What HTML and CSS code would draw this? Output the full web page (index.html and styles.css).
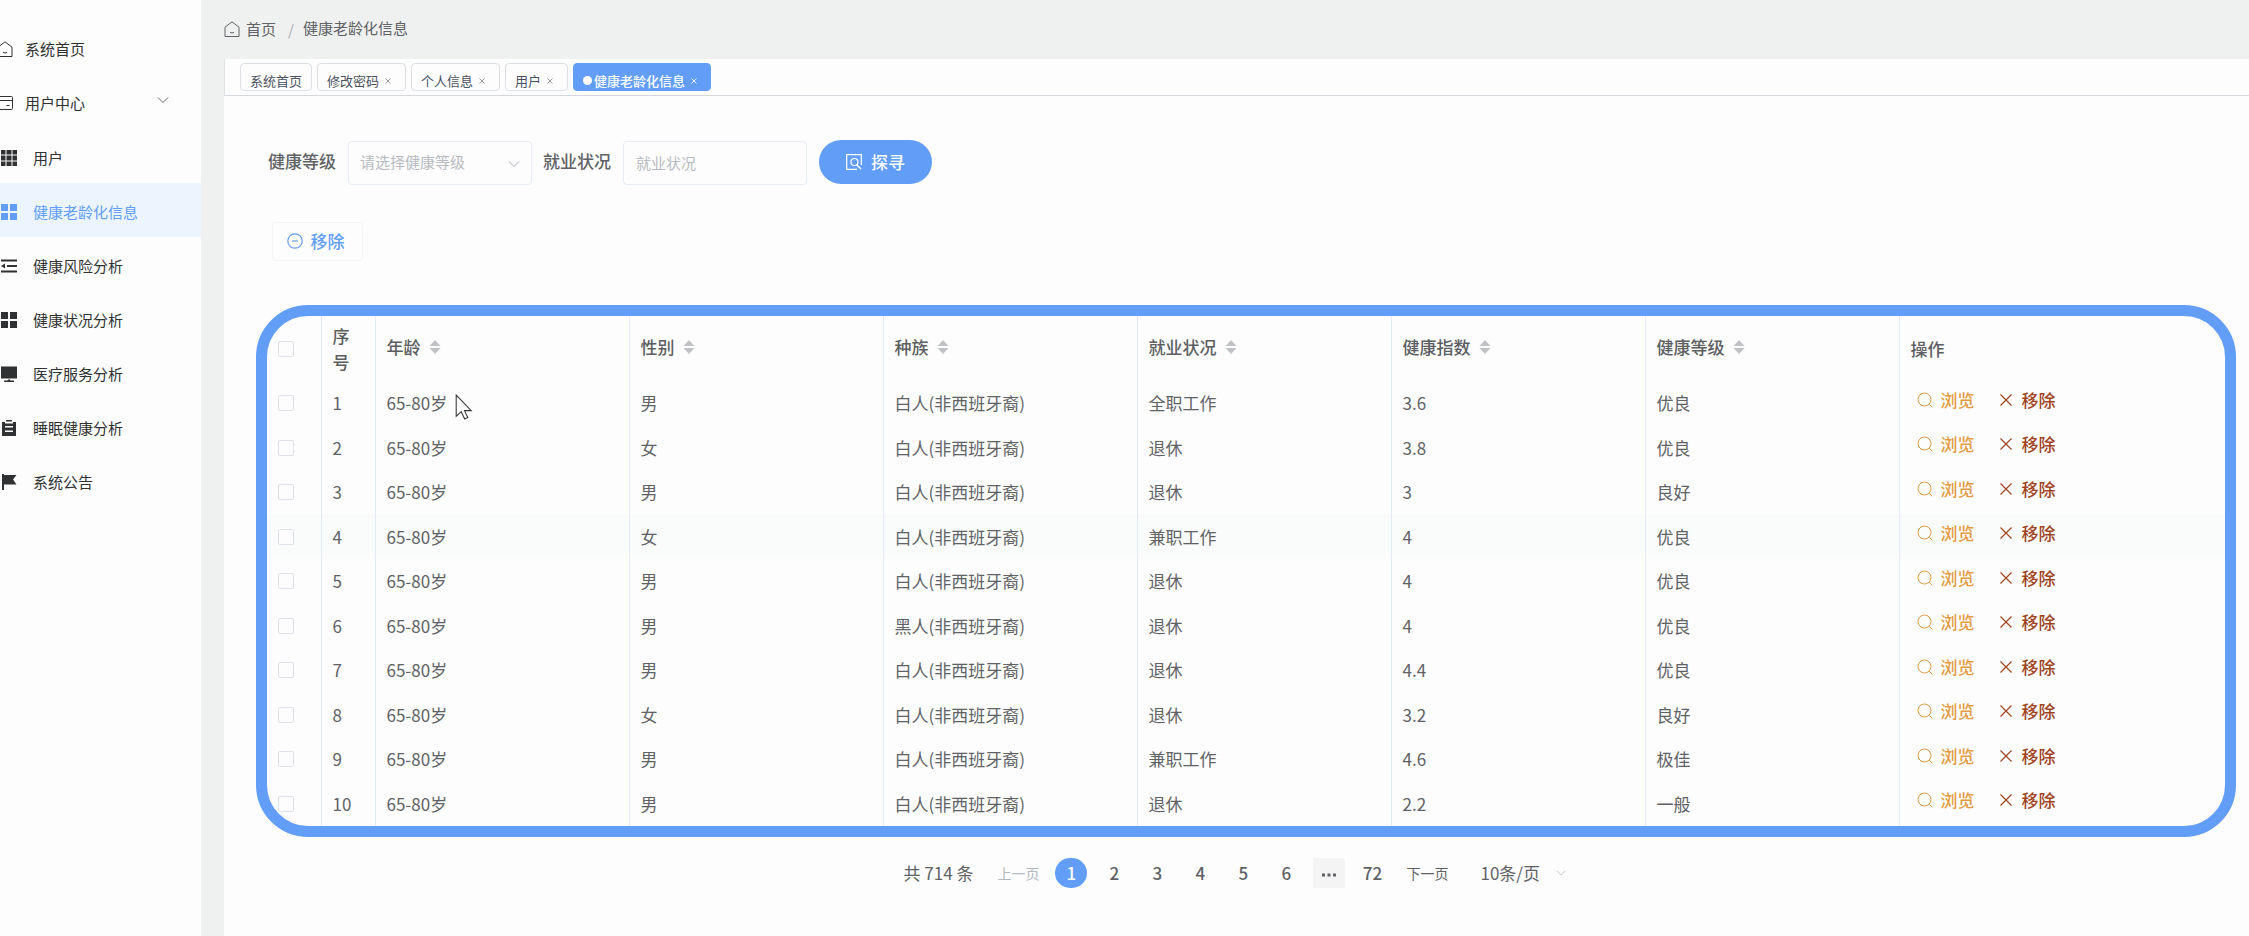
FILE: index.html
```html
<!DOCTYPE html>
<html lang="zh-CN">
<head>
<meta charset="utf-8">
<title>健康老龄化信息</title>
<link rel="stylesheet" href="styles.css">
</head>
<body>
<svg class="sprite" aria-hidden="true">
  <symbol id="home" viewBox="0 0 16 16"><path d="M1 6.200 8 .8l7 5.400v9.300H1zM6 11.200c1.200 1 2.800 1 4 0" fill="none" stroke="currentColor" stroke-linejoin="round"/></symbol>
  <symbol id="search" viewBox="0 0 16 16"><circle cx="7.500" cy="7.500" r="6.500" fill="none" stroke="currentColor"/><path d="m12.300 12.300 3 3" stroke="currentColor"/></symbol>
  <symbol id="cross" viewBox="0 0 16 16"><path d="m2.500 2.500 11 11M13.500 2.500l-11 11" fill="none" stroke="currentColor" stroke-width="1.200"/></symbol>
  <symbol id="close" viewBox="0 0 8 8"><path d="m1.500 1.500 5 5M6.500 1.500l-5 5" fill="none" stroke="currentColor"/></symbol>
  <symbol id="down" viewBox="0 0 12 12"><path d="m1 3.500 5 5 5-5" fill="none" stroke="currentColor"/></symbol>
  <symbol id="sort" viewBox="0 0 12 14"><path d="M6 0l5.500 6H.5zM6 14l5.500-6H.5z" fill="currentColor"/></symbol>
</svg>
<div class="app">
  <nav class="sidebar">
    <a class="item top" href="#"><svg class="icon"><use href="#home"/></svg>系统首页</a>
    <a class="item top" href="#"><svg class="icon" viewBox="0 0 16 16"><path d="M1 1.500h13.500q1 0 1 1v11q0 1-1 1H1M1 5.500h14.500M9.500 10.500h3" fill="none" stroke="currentColor"/></svg>用户中心<svg class="caret"><use href="#down"/></svg></a>
    <a class="item" href="#"><svg class="icon" viewBox="0 0 16 16"><path d="M0 0h4.500v4.500H0zM5.500 0h5v4.500h-5zM11.500 0H16v4.500h-4.500zM0 5.500h4.500v5H0zM5.500 5.500h5v5h-5zM11.500 5.500H16v5h-4.500zM0 11.500h4.500V16H0zM5.500 11.500h5V16h-5zM11.500 11.500H16V16h-4.500z" fill="currentColor"/></svg>用户</a>
    <a class="item active" href="#"><svg class="icon" viewBox="0 0 16 16"><path d="M0 0h7v7H0zM9 0h7v7H9zM0 9h7v7H0zM9 9h7v7H9z" fill="currentColor"/></svg>健康老龄化信息</a>
    <a class="item" href="#"><svg class="icon" viewBox="0 0 16 16"><path d="M0 1.500h16v2H0zM6 7h10v2H6zM0 12.500h16v2H0zM0 8l4-2.500v5z" fill="currentColor"/></svg>健康风险分析</a>
    <a class="item" href="#"><svg class="icon" viewBox="0 0 16 16"><path d="M0 0h7v7H0zM9 0h7v7H9zM0 9h7v7H0zM9 9h7v7H9z" fill="currentColor"/></svg>健康状况分析</a>
    <a class="item" href="#"><svg class="icon" viewBox="0 0 16 16"><path d="M0 .5h16v12H0zM7 13.500h2l.5 1H13V16H3v-1.500h3.500z" fill="currentColor"/></svg>医疗服务分析</a>
    <a class="item" href="#"><svg class="icon" viewBox="0 0 16 16"><path fill-rule="evenodd" d="M5 0h6v1.500H5zM1 2h3v1.500h8V2h3v14H1zM4 6v1.500h8V6zM4 10.500V12h8v-1.500z" fill="currentColor"/></svg>睡眠健康分析</a>
    <a class="item" href="#"><svg class="icon" viewBox="0 0 16 16"><path d="M1 0h2v1h12.500L12 5.500l3.500 5H3V16H1z" fill="currentColor"/></svg>系统公告</a>
  </nav>
  <div class="page">
    <header class="crumbs">
      <a class="crumb-home" href="#"><svg class="icon"><use href="#home"/></svg>首页</a>
      <span class="slash">/</span>
      <span class="crumb">健康老龄化信息</span>
    </header>
    <div class="tabs">
      <a class="tab" href="#">系统首页</a>
      <a class="tab closable" href="#">修改密码<svg class="close"><use href="#close"/></svg></a>
      <a class="tab closable" href="#">个人信息<svg class="close"><use href="#close"/></svg></a>
      <a class="tab closable" href="#">用户<svg class="close"><use href="#close"/></svg></a>
      <a class="tab closable current" href="#"><i class="dot"></i>健康老龄化信息<svg class="close"><use href="#close"/></svg></a>
    </div>
    <main class="content">
      <form class="filters">
        <label for="level">健康等级</label>
        <span class="select-box"><select id="level"><option>请选择健康等级</option></select><svg class="caret"><use href="#down"/></svg></span>
        <label for="job">就业状况</label>
        <input id="job" type="text" placeholder="就业状况">
        <button class="search" type="button"><svg class="icon" viewBox="0 0 16 16"><path d="M15.300 11V.7H.7v14.600H11" fill="none" stroke="currentColor" stroke-width="1.200"/><path d="m10.500 10.500 4.500 4.500" stroke="currentColor" stroke-width="1.500"/><circle cx="8.500" cy="8" r="3.500" fill="none" stroke="currentColor" stroke-width="1.200"/></svg>探寻</button>
      </form>
      <div class="toolbar">
        <button class="remove" type="button"><svg class="icon" viewBox="0 0 16 16"><circle cx="8" cy="8" r="7.200" fill="none" stroke="currentColor" stroke-width="1.200"/><path d="M5 8h6" stroke="currentColor" stroke-width="1.200"/></svg>移除</button>
      </div>
      <div class="table-frame">
        <table>
          <colgroup><col class="c-small"><col class="c-small"><col class="c-data"><col class="c-data"><col class="c-data"><col class="c-data"><col class="c-data"><col class="c-data"><col></colgroup>
          <thead>
            <tr><th><input type="checkbox" aria-label="全选"></th><th>序号</th><th><span class="sortable">年龄<svg class="sort"><use href="#sort"/></svg></span></th><th><span class="sortable">性别<svg class="sort"><use href="#sort"/></svg></span></th><th><span class="sortable">种族<svg class="sort"><use href="#sort"/></svg></span></th><th><span class="sortable">就业状况<svg class="sort"><use href="#sort"/></svg></span></th><th><span class="sortable">健康指数<svg class="sort"><use href="#sort"/></svg></span></th><th><span class="sortable">健康等级<svg class="sort"><use href="#sort"/></svg></span></th><th>操作</th></tr>
          </thead>
          <tbody id="rows"></tbody>
        </table>
      </div>
      <div class="pager">
        <span class="total">共 714 条</span>
        <button class="step" type="button" disabled>上一页</button>
        <div class="numbers">
          <button class="num on" type="button">1</button><button class="num" type="button">2</button><button class="num" type="button">3</button><button class="num" type="button">4</button><button class="num" type="button">5</button><button class="num" type="button">6</button><button class="num more" type="button" aria-label="更多"><svg viewBox="0 0 14 4"><path d="M0 .5h3v3H0zM5.500 .5h3v3h-3zM11 .5h3v3h-3z" fill="currentColor"/></svg></button><button class="num" type="button">72</button>
        </div>
        <button class="step" type="button">下一页</button>
        <span class="size-box"><select aria-label="每页条数"><option>10条/页</option></select><svg class="caret"><use href="#down"/></svg></span>
      </div>
    </main>
  </div>
</div>
<svg class="pointer" viewBox="0 0 17 25" aria-hidden="true"><path d="M1 1v20.500l4.800-4.500 3.400 7 3-1.400-3.300-6.600h6.600z" fill="#fff" stroke="#333"/></svg>
<script src="rows.js"></script>
</body>
</html>
```
FILE: styles.css
```css
* { box-sizing: border-box; }
body {
  margin: 0;
  color: #606266;
  background: #fdfdfd;
  font: 17px/26px "Noto Sans CJK SC", "Noto Sans", sans-serif;
}
a { color: inherit; text-decoration: none; }
button, input, select { font: inherit; color: inherit; margin: 0; }
button { border: 0; background: none; padding: 0; }
.sprite { display: none; }
.icon { width: 16px; height: 16px; flex: none; }
.caret { width: 12px; height: 12px; flex: none; }
.app { display: flex; min-height: 100vh; }

.sidebar { width: 201px; flex: none; padding-top: 21px; background: #fdfdfd; color: #303133; font-size: 15px; }
.item { display: flex; align-items: center; gap: 16px; height: 54px; padding-left: 1px; padding-top: 4px; }
.item.top { gap: 12px; padding-left: 0; padding-top: 2px; }
.item.top .icon { margin-left: -3px; }
.item .caret { margin: 0 32px 6px auto; color: #666; }
.item.active { background: #ecf5fe; color: #629ef8; }

.page { flex: 1; min-width: 0; display: flex; flex-direction: column; padding-left: 23px; background: #eff1f1; }
.crumbs { display: flex; align-items: flex-start; height: 59px; padding-top: 15px; font-size: 15px; }
.crumb-home { display: flex; align-items: center; gap: 6px; padding-top: 1px; }
.slash { width: 27px; padding: 2px 0 0 12px; color: #a8abb2; }
.tabs { display: flex; gap: 5px; height: 37px; padding: 4px 15px; background: #fdfdfd; border-bottom: 1px solid #d5d8dc; border-left: 1px solid #e0e3e6; }
.tab { display: flex; align-items: center; height: 28px; padding: 7px 9px 0; border: 1px solid #dcdfe4; border-radius: 4px; font-size: 13px; color: #495060; }
.tab.closable { padding-right: 14px; }
.close { width: 8px; height: 8px; margin-left: 5px; margin-right: -1px; color: #999; }
.tab.current { background: #629ef8; border-color: #629ef8; color: #fff; font-weight: 500; padding-right: 13px; }
.current .close { color: #f0f5ff; }
.dot { width: 9px; height: 9px; border-radius: 50%; background: #fff; margin-right: 2px; }

.content { flex: 1; padding: 44px 13px 0 32px; background: #fdfdfd; }
.filters { display: flex; align-items: center; padding-left: 12px; height: 44px; }
.filters label { font-weight: 500; margin-right: 12px; padding-bottom: 2px; }
.select-box { position: relative; display: flex; width: 184px; margin-right: 11px; }
.select-box .caret { position: absolute; right: 12px; top: 19px; color: #a8abb2; pointer-events: none; }
.filters select, .filters input { appearance: none; width: 184px; height: 44px; margin-top: 2px; padding: 0 12px 2px; border: 1px solid #e6ebf5; border-radius: 4px; background: #fdfdfd; font-size: 15px; color: #b8bbc1; }
.filters select { padding-left: 11px; }
.filters input::placeholder { color: #b8bbc1; }
.search { display: flex; align-items: center; justify-content: center; gap: 9px; width: 113px; height: 44px; margin-left: 12px; border-radius: 22px; background: #629ef8; color: #fff; font-weight: 500; }
.toolbar { padding: 38px 16px 44px; }
.remove { display: flex; align-items: center; justify-content: center; gap: 8px; width: 91px; height: 39px; padding: 0 4px 2px 0; border: 1px solid #f3f5f9; border-radius: 4px; color: #629ef8; font-weight: 500; }

.table-frame { border: 11px solid #629ef8; border-radius: 52px; overflow: hidden; }
table { width: 100%; table-layout: fixed; border-collapse: collapse; }
.c-small { width: 54px; }
.c-data { width: 254px; }
th, td { padding: 0 11px; text-align: left; border-left: 1px solid #e4ebf6; font-weight: 400; }
th:first-child, td:first-child { border-left: 0; }
th { height: 65px; font-weight: 500; color: #5c5e62; }
tr { height: 44px; }
tbody tr:nth-child(even) { height: 45px; }
tr.hover { background: #fafcfc; }
input[type="checkbox"] { appearance: none; display: block; width: 16px; height: 16px; border: 1px solid #dfe2e8; border-radius: 2px; background: #fdfdfd; }
.sortable { display: flex; align-items: center; gap: 8px; padding-bottom: 4px; }
.sort { width: 12px; height: 14px; color: #c0c2c6; }
.actions { display: flex; gap: 23px; padding: 0 0 7px 6px; }
.actions button { display: flex; align-items: center; gap: 8px; font-weight: 500; }
.view { color: #e39a42; }
.delete { color: #a0441f; }

.pager { display: flex; align-items: center; justify-content: center; padding-top: 21px; margin-right: 22px; }
.total { margin-right: 24px; }
.step { font-size: 14px; }
.step:disabled { color: #b4b8bf; }
.numbers { display: flex; gap: 11px; margin: 0 18px 0 16px; }
.num { width: 32px; height: 30px; border-radius: 2px; font-weight: 500; }
.num.on { border-radius: 16px; background: #629ef8; color: #fff; }
.num.more { background: #f4f4f5; }
.more svg { display: block; width: 14px; height: 4px; margin: 4px auto 0; }
.size-box { display: flex; align-items: center; gap: 16px; margin-left: 32px; }
.size-box select { appearance: none; border: 0; padding: 0; background: none; }
.size-box .caret { width: 10px; height: 10px; color: #b8bcc2; }
.pointer { position: absolute; left: 455px; top: 394px; width: 18px; height: 26px; }
```
FILE: rows.js
```js
const people = [
  ["男", "白人(非西班牙裔)", "全职工作", "3.6", "优良"],
  ["女", "白人(非西班牙裔)", "退休", "3.8", "优良"],
  ["男", "白人(非西班牙裔)", "退休", "3", "良好"],
  ["女", "白人(非西班牙裔)", "兼职工作", "4", "优良"],
  ["男", "白人(非西班牙裔)", "退休", "4", "优良"],
  ["男", "黑人(非西班牙裔)", "退休", "4", "优良"],
  ["男", "白人(非西班牙裔)", "退休", "4.4", "优良"],
  ["女", "白人(非西班牙裔)", "退休", "3.2", "良好"],
  ["男", "白人(非西班牙裔)", "兼职工作", "4.6", "极佳"],
  ["男", "白人(非西班牙裔)", "退休", "2.2", "一般"]
];
document.getElementById("rows").innerHTML = people.map((p, i) => `
  <tr class="${i === 3 ? "hover" : ""}">
    <td><input type="checkbox" aria-label="选择第${i + 1}行"></td>
    <td>${i + 1}</td><td>65-80岁</td>
    ${p.map(v => `<td>${v}</td>`).join("")}
    <td><div class="actions">
      <button class="view" type="button"><svg class="icon"><use href="#search"/></svg>浏览</button>
      <button class="delete" type="button"><svg class="icon"><use href="#cross"/></svg>移除</button>
    </div></td>
  </tr>`).join("");
```
